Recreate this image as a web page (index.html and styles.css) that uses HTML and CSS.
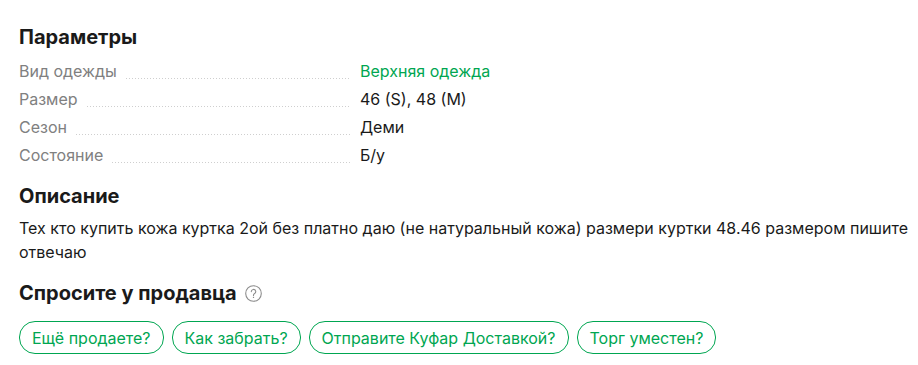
FILE: index.html
```html
<!DOCTYPE html>
<html lang="ru">
<head>
  <meta charset="UTF-8">
  <title>Параметры</title>
  <link rel="stylesheet" href="styles.css">
</head>
<body>
  <section class="block">
    <h2 class="block-title">Параметры</h2>
    <ul class="params">
      <li class="param">
        <span class="param-name">Вид одежды</span>
        <span class="param-value link">Верхняя одежда</span>
      </li>
      <li class="param">
        <span class="param-name">Размер</span>
        <span class="param-value">46 (S), 48 (M)</span>
      </li>
      <li class="param">
        <span class="param-name">Сезон</span>
        <span class="param-value">Деми</span>
      </li>
      <li class="param">
        <span class="param-name">Состояние</span>
        <span class="param-value">Б/у</span>
      </li>
    </ul>
  </section>

  <section class="block">
    <h2 class="block-title">Описание</h2>
    <p class="description">Тех кто купить кожа куртка 2ой без платно даю (не натуральный кожа) размери куртки 48.46 размером пишите отвечаю</p>
  </section>

  <section class="block">
    <h2 class="block-title">Спросите у продавца
      <svg class="help" width="17" height="17" viewBox="0 0 17 17" aria-hidden="true">
        <circle cx="8.5" cy="8.5" r="7.8" fill="none" stroke="#8c8c8c" stroke-width="1.1"/>
        <path d="M6.3 6.6a2.2 2.2 0 1 1 3.3 1.9c-.7.4-1.1.8-1.1 1.6v.5" fill="none" stroke="#8c8c8c" stroke-width="1.1" stroke-linecap="round"/>
        <circle cx="8.5" cy="12.4" r=".7" fill="#8c8c8c"/>
      </svg>
    </h2>
    <div class="questions">
      <button class="question">Ещё продаете?</button>
      <button class="question">Как забрать?</button>
      <button class="question">Отправите Куфар Доставкой?</button>
      <button class="question">Торг уместен?</button>
    </div>
  </section>
</body>
</html>
```

FILE: styles.css
```css
:root {
  --text: #1a1a1a;
  --muted: #808080;
  --green: #00a651;
  --dots: #cfcfcf;
}

* {
  box-sizing: border-box;
  margin: 0;
  padding: 0;
}

body {
  font-family: Inter, 'Noto Sans', sans-serif;
  color: var(--text);
  background: #fff;
  padding: 24px 8px 0 19px;
  font-size: 16px;
  line-height: 24px;
}

.block {
  margin-bottom: 14px;
}

.block-title {
  font-size: 20px;
  font-weight: 700;
  line-height: 26px;
  margin-bottom: 7px;
  display: flex;
  align-items: center;
  gap: 8px;
}

.help {
  margin-top: 1px;
}

/* параметры */
.params {
  list-style: none;
}

.param {
  display: flex;
  align-items: baseline;
  height: 28px;
  line-height: 28px;
}

.param-name {
  display: flex;
  align-items: baseline;
  width: 331px;
  color: var(--muted);
}

.param-name::after {
  content: '';
  flex: 1;
  height: 1px;
  margin-left: 9px;
  background: linear-gradient(to right, var(--dots) 1px, transparent 1px) 0 0 / 3px 1px repeat-x;
  transform: translateY(2px);
}

.param-value {
  margin-left: 10px;
}

.param-value.link {
  color: var(--green);
}

/* описание */
.description {
  line-height: 24px;
  padding-bottom: 2px;
}

/* вопросы */
.questions {
  display: flex;
  gap: 8px;
  margin-top: 15px;
}

.question {
  font-family: inherit;
  font-size: 16px;
  color: var(--green);
  background: #fff;
  border: 1px solid var(--green);
  border-radius: 16px;
  height: 33px;
  padding: 0 12px;
  cursor: pointer;
}
```
